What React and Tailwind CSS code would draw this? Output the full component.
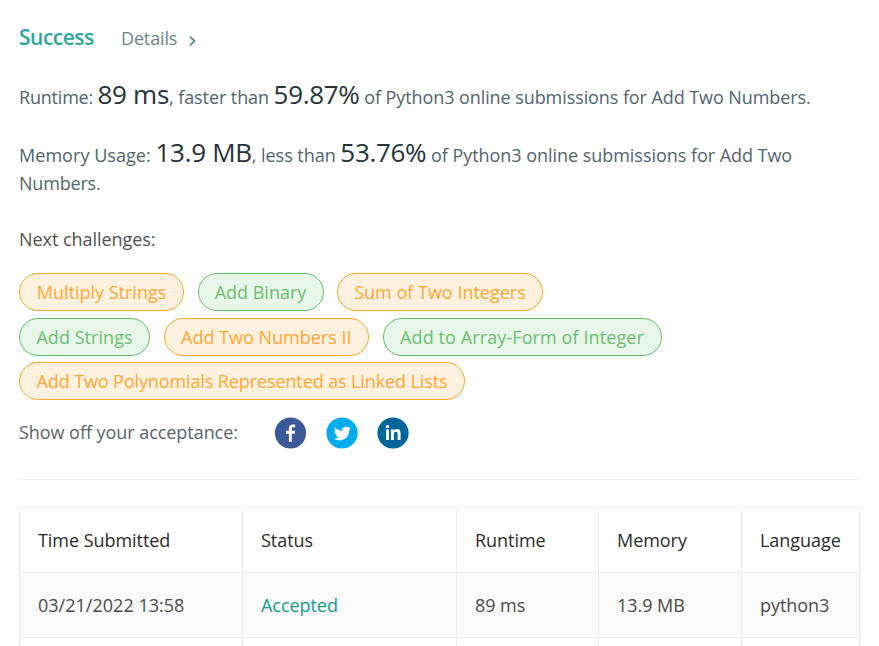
const challengeRows = [
  [
    { title: 'Multiply Strings', level: 'medium', width: 'w-[165px]' },
    { title: 'Add Binary', level: 'easy', width: 'w-[126px]' },
    { title: 'Sum of Two Integers', level: 'medium', width: 'w-[206px]' },
  ],
  [
    { title: 'Add Strings', level: 'easy', width: 'w-[131px] tracking-[0.05px]' },
    { title: 'Add Two Numbers II', level: 'medium', width: 'w-[205.5px]' },
    { title: 'Add to Array-Form of Integer', level: 'easy', width: 'w-[279px] tracking-[0.1px]' },
  ],
  [{ title: 'Add Two Polynomials Represented as Linked Lists', level: 'medium', width: 'w-[446px] tracking-[-0.11px]' }],
];

const levelStyles = {
  medium: 'border-[#ffa726] bg-[#fff1df] text-[#ffa733]',
  easy: 'border-[#66bb6a] bg-[#e8f5e9] text-[#6cbd70]',
};

function Stat({ children }) {
  return <span className="text-[26px] leading-5 tracking-[-0.3px] text-[#263238]">{children}</span>;
}

function Challenge({ title, level, width }) {
  return (
    <a className={`flex h-[38px] items-center justify-center rounded-full border whitespace-nowrap ${width} ${levelStyles[level]}`}>
      {title}
    </a>
  );
}

function FacebookIcon() {
  return (
    <svg viewBox="0 0 32 32" className="size-8">
      <circle cx="15.5" cy="16" r="15.6" fill="#3b5998" />
      <path fill="#fff" d="M16.8 24.8v-8h2.9l.4-3h-3.3v-1.9c0-.9.4-1.6 1.6-1.6h1.8V7.6c-.4-.1-1.3-.2-2.3-.2-2.6 0-4 1.5-4 4.1v2.3h-2.8v3h2.8v8z" />
    </svg>
  );
}

function TwitterIcon() {
  return (
    <svg viewBox="0 0 32 32" className="size-8">
      <circle cx="16" cy="16" r="15.6" fill="#00aced" />
      <path fill="#fff" transform="translate(7.9 7.9) scale(.71)" d="M23.953 4.57a10 10 0 01-2.825.775 4.958 4.958 0 002.163-2.723c-.951.555-2.005.959-3.127 1.184a4.92 4.92 0 00-8.384 4.482C7.69 8.095 4.067 6.13 1.64 3.162a4.822 4.822 0 00-.666 2.475c0 1.71.87 3.213 2.188 4.096a4.904 4.904 0 01-2.228-.616v.06a4.923 4.923 0 003.946 4.827 4.996 4.996 0 01-2.212.085 4.936 4.936 0 004.604 3.417 9.867 9.867 0 01-6.102 2.105c-.39 0-.779-.023-1.17-.067a13.995 13.995 0 007.557 2.209c9.053 0 13.998-7.496 13.998-13.985 0-.21 0-.42-.015-.63A9.935 9.935 0 0024 4.59z" />
    </svg>
  );
}

function LinkedInIcon() {
  return (
    <svg viewBox="0 0 32 32" className="size-8">
      <circle cx="16" cy="16" r="15.6" fill="#006699" />
      <g fill="#fff">
        <circle cx="10.5" cy="9.6" r="1.7" />
        <path d="M9 12.4h3V23h-3zM13.9 12.4h2.9v1.4c.5-.9 1.5-1.7 3-1.7 3.1 0 3.8 2 3.8 4.9V23h-3v-5.4c0-1.3-.1-2.8-1.7-2.8s-2 1.3-2 2.7V23h-3z" />
      </g>
    </svg>
  );
}

export default function App() {
  const cell = 'border border-[#eeeeee] pl-[18px] text-left align-middle h-[65px]';
  return (
    <main className="h-[646px] overflow-hidden bg-white px-[19px] font-['Open_Sans',sans-serif] text-[18px] leading-7 font-normal text-[#51646e]">
      <header className="flex h-[83px] items-baseline pt-[23px]">
        <h1 className="w-[102px] text-[21px] font-semibold tracking-[-0.5px] text-[#2ea69c]">Success</h1>
        <a className="flex items-center tracking-[-0.15px] text-[#6a8592]">
          Details
          <svg viewBox="0 0 8 12" className="mt-1.5 ml-3 h-3 w-2" fill="none" stroke="currentColor" strokeWidth="1.8">
            <path d="M1 1.7 5.5 6 1 10.3" />
          </svg>
        </a>
      </header>

      <p className="h-[58px] tracking-[-0.08px] whitespace-nowrap">
        <span className="tracking-[-0.2px]">Runtime: </span><Stat>89 ms</Stat>, faster than <Stat>59.87%</Stat> of Python3 online submissions for Add Two Numbers.
      </p>
      <p className="h-[84px] tracking-[-0.04px] whitespace-nowrap">
        <span className="tracking-[0.05px]">Memory Usage: </span><Stat>13.9 MB</Stat>, less than <Stat>53.76%</Stat> of Python3 online submissions for Add Two
        <br />
        <span className="tracking-[-0.2px]">Numbers.</span>
      </p>

      <p className="h-12 tracking-[-0.05px] text-[#505050]">Next challenges:</p>
      <section className="flex flex-col gap-[6.5px]">
        {challengeRows.map((row) => (
          <div key={row[0].title} className="flex gap-[13.5px]">
            {row.map((item) => (
              <Challenge key={item.title} {...item} />
            ))}
          </div>
        ))}
      </section>

      <div className="mt-[17px] flex h-8 items-center text-[#58646b]">
        <span className="w-[255.5px] pb-0.5 tracking-[-0.05px]">Show off your acceptance:</span>
        <div className="flex gap-[19px]">
          <FacebookIcon />
          <TwitterIcon />
          <LinkedInIcon />
        </div>
      </div>

      <hr className="mt-[30px] border-[#eeeeee]" />

      <table className="mt-[27px] w-[841px] table-fixed border-collapse tracking-[-0.05px]">
        <colgroup>
          <col className="w-[223px]" />
          <col className="w-[214px]" />
          <col className="w-[142px]" />
          <col className="w-[143px]" />
          <col className="w-[118px]" />
        </colgroup>
        <thead>
          <tr className="text-[#2b2b2b]">
            {['Time Submitted', 'Status', 'Runtime', 'Memory', 'Language'].map((label) => (
              <th key={label} className={`${cell} font-normal`}>{label}</th>
            ))}
          </tr>
        </thead>
        <tbody>
          <tr className="bg-[#fafafa] text-[#4b4b4b]">
            <td className={`${cell} tracking-[0.02px]`}>03/21/2022 13:58</td>
            <td className={`${cell} text-[#129c8f]`}>Accepted</td>
            <td className={cell}>89 ms</td>
            <td className={cell}>13.9 MB</td>
            <td className={cell}>python3</td>
          </tr>
          <tr>
            <td className={cell} />
            <td className={cell} />
            <td className={cell} />
            <td className={cell} />
            <td className={cell} />
          </tr>
        </tbody>
      </table>
    </main>
  );
}
